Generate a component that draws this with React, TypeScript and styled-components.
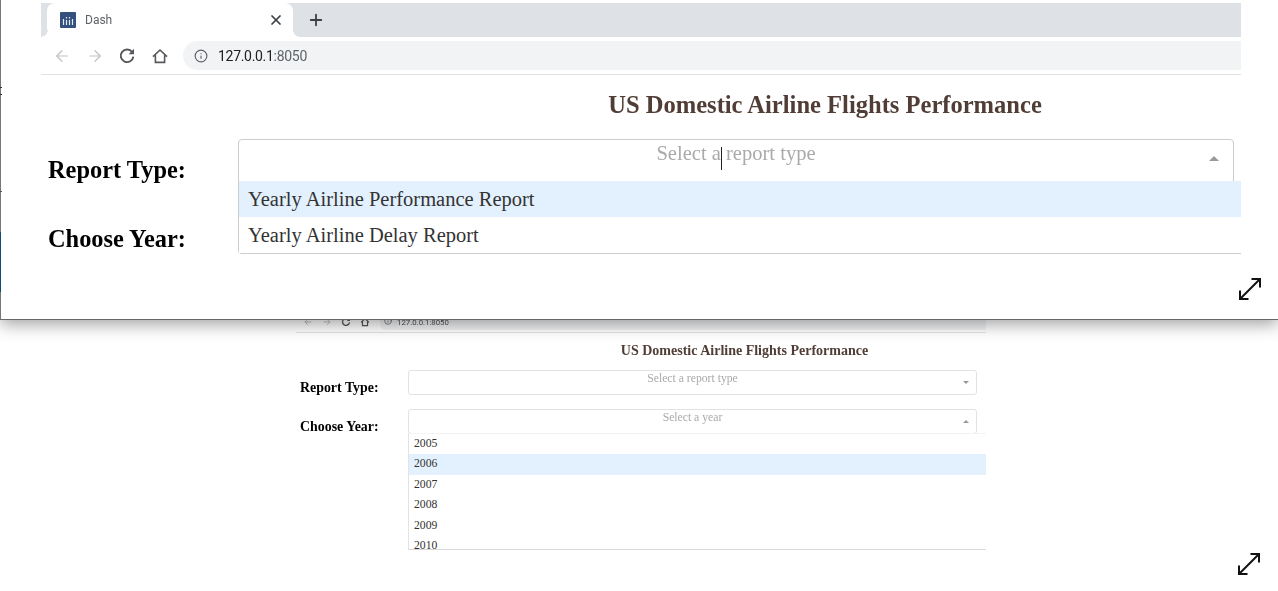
import React from "react";
import styled, { createGlobalStyle } from "styled-components";
import { ArrowLeft, ArrowRight, Info, X, Plus } from "lucide-react";

const Global = createGlobalStyle`
  html, body { margin: 0; padding: 0; background: #fff; }
  body { width: 1278px; height: 591px; overflow: hidden; font-family: "Liberation Serif", serif; }
`;
const Page = styled.div`
  position: relative;
  width: 1278px;
  height: 591px;
  display: flex;
  flex-direction: column;
  overflow: hidden;
`;
const TopPanel = styled.section`
  position: relative;
  z-index: 2;
  box-sizing: border-box;
  height: 320px;
  padding: 3px 37px 0 40px;
  background: #fff;
  border-left: 1px solid #777;
  border-bottom: 1px solid #666;
  box-shadow: 0 4px 16px rgba(0, 0, 0, 0.38);
`;
const EdgeMark = styled.i<{ $top: number; $h: number; $w: number; $c: string }>`
  position: absolute;
  left: -1px;
  top: ${(p) => p.$top}px;
  width: ${(p) => p.$w}px;
  height: ${(p) => p.$h}px;
  background: ${(p) => p.$c};
`;
const LowerPanel = styled.section`
  position: relative;
  z-index: 1;
  flex: 1;
  padding-left: 296px;
`;
const TabStrip = styled.div`
  height: 34px;
  background: #dee1e6;
  display: flex;
  align-items: flex-end;
  padding-left: 6px;
`;
const Tab = styled.div`
  position: relative;
  width: 246px;
  height: 34px;
  box-sizing: border-box;
  background: #fff;
  border-radius: 8px 8px 0 0;
  display: flex;
  align-items: center;
  padding: 0 9px 0 13px;
  color: #5f6368;
  font: 12px "Roboto", sans-serif;
  &::before, &::after {
    content: "";
    position: absolute;
    bottom: 0;
    width: 7px;
    height: 7px;
  }
  &::before {
    left: -6px;
    background: radial-gradient(circle at 0 0, #dee1e6 6.5px, #fff 7px);
  }
  &::after {
    right: -7px;
    background: radial-gradient(circle at 100% 0, #dee1e6 6.5px, #fff 7px);
  }
`;
const TabTitle = styled.span`
  flex: 1;
  margin-left: 9px;
`;
const NewTab = styled.div`
  width: 46px;
  display: flex;
  justify-content: center;
  align-self: center;
  color: #3c4043;
`;
const Toolbar = styled.div`
  height: 38px;
  box-sizing: border-box;
  display: flex;
  align-items: center;
  padding: 4px 0 4px 11px;
  gap: 15px;
  border-bottom: 1px solid #e1e2e3;
`;
const NavIcon = styled.span<{ $off?: boolean }>`
  display: flex;
  color: ${(p) => (p.$off ? "#bfc1c4" : "#55585c")};
  ${(p) => (p.$off ? "transform: translateX(1px);" : "")}
`;
const Omnibox = styled.div`
  flex: 1;
  height: 29px;
  margin-left: -1px;
  background: #f1f3f4;
  border-radius: 15px 0 0 15px;
  display: flex;
  align-items: center;
  padding-left: 11px;
  gap: 10px;
  color: #5f6368;
  font: 14px "Roboto", sans-serif;
  letter-spacing: -0.3px;
`;
const Host = styled.span`
  color: #202124;
`;
const Title = styled.h1`
  margin: 0;
  padding: 14px 0 0 368px;
  height: 32px;
  text-align: center;
  font: bold 24.55px/32px "Liberation Serif", serif;
  color: #503d36;
`;
const Rows = styled.div`
  position: relative;
  margin-top: 12px;
`;
const Row = styled.div`
  display: flex;
  align-items: flex-start;
  height: 69px;
  padding-left: 7px;
`;
const Label = styled.h2`
  margin: 22px 0 0;
  width: 190px;
  font: bold 24.4px/30px "Liberation Serif", serif;
  color: #000;
`;
const Select = styled.div`
  position: relative;
  box-sizing: border-box;
  width: 996px;
  height: 43px;
  margin-top: 6px;
  border: 1px solid #ccc;
  border-radius: 4px 4px 0 0;
  text-align: center;
  font-size: 20.55px;
  line-height: 26px;
  color: #aaa;
`;
const Placeholder = styled.span`
  position: relative;
`;
const Caret = styled.i`
  position: absolute;
  left: 64.5px;
  top: 5px;
  width: 1px;
  height: 23px;
  background: #222;
`;
const Arrow = styled.i<{ $size: number; $right: number; $top: number; $down?: boolean }>`
  position: absolute;
  right: ${(p) => p.$right}px;
  top: ${(p) => p.$top}px;
  width: 0;
  height: 0;
  border-left: ${(p) => p.$size}px solid transparent;
  border-right: ${(p) => p.$size}px solid transparent;
  ${(p) =>
    p.$down
      ? `border-top: ${p.$size}px solid #999;`
      : `border-bottom: ${p.$size}px solid #999;`}
`;
const Menu = styled.div`
  position: absolute;
  left: 197px;
  top: 48px;
  width: 1003px;
  height: 73px;
  box-sizing: border-box;
  background: #fff;
  border-left: 1px solid #ccc;
  border-bottom: 1px solid #ccc;
  border-radius: 0 0 0 4px;
  font-size: 20.5px;
  color: #333;
`;
const Option = styled.div<{ $active?: boolean }>`
  height: 36px;
  line-height: 36px;
  padding-left: 9px;
  background: ${(p) => (p.$active ? "#e3f1fe" : "#fff")};
`;
const Expand = styled.svg<{ $top: number }>`
  position: absolute;
  left: 1236px;
  top: ${(p) => p.$top}px;
`;
const Shot = styled.div`
  width: 690px;
  filter: blur(0.35px);
`;
const MiniBar = styled.div`
  height: 13px;
  box-sizing: border-box;
  display: flex;
  align-items: flex-start;
  padding: 0 0 0 7px;
  gap: 9px;
  border-bottom: 1px solid #e4e4e4;
`;
const MiniBox = styled.div`
  flex: 1;
  height: 10px;
  box-sizing: border-box;
  margin-left: 1px;
  background: #f1f3f4;
  border-radius: 0 0 0 6px;
  display: flex;
  align-items: flex-start;
  gap: 5px;
  padding: 0 0 0 4px;
  color: #4d5054;
  font: 7.8px/5px "Roboto", sans-serif;
`;
const MiniIcon = styled.span<{ $off?: boolean }>`
  display: flex;
  margin-top: -3px;
  color: ${(p) => (p.$off ? "#b5b7ba" : "#55585c")};
`;
const MiniTitle = styled.h1`
  margin: 0;
  padding: 9px 0 0 207px;
  height: 28px;
  text-align: center;
  font: bold 14px/18px "Liberation Serif", serif;
  color: #503d36;
`;
const MiniRow = styled.div`
  display: flex;
  align-items: flex-start;
  height: 39px;
  padding-left: 4px;
`;
const MiniLabel = styled.h2`
  margin: 8px 0 0;
  width: 108px;
  font: bold 13.9px/20px "Liberation Serif", serif;
  color: #000;
`;
const MiniSelect = styled.div`
  position: relative;
  box-sizing: border-box;
  width: 569px;
  height: 25px;
  border: 1px solid #e2e2e2;
  border-radius: 3px;
  text-align: center;
  font-size: 11.7px;
  line-height: 15px;
  color: #aaa;
`;
const MiniRows = styled.div`
  position: relative;
`;
const MiniMenu = styled.div`
  position: absolute;
  left: 112px;
  top: 63px;
  width: 578px;
  height: 117px;
  box-sizing: border-box;
  overflow: hidden;
  background: #fff;
  border-top: 1px solid #f3f3f3;
  border-left: 1px solid #e2e2e2;
  border-bottom: 1px solid #d8d8d8;
  font-size: 11.7px;
  color: #333;
`;
const MiniOption = styled.div<{ $active?: boolean }>`
  height: 20.45px;
  line-height: 20.45px;
  padding-left: 5px;
  background: ${(p) => (p.$active ? "#e3f1fe" : "#fff")};
`;

const ExpandIcon = ({ top }: { top: number }) => (
  <Expand $top={top} width="26" height="26" viewBox="0 0 26 26" fill="none" stroke="#111" strokeWidth="2">
    <path d="M3 23 L23 3" />
    <path d="M14.5 3 H23 V11.5" />
    <path d="M3 14.5 V23 H11.5" />
  </Expand>
);

const ReloadIcon = ({ size, w = 1.9 }: { size: number; w?: number }) => (
  <svg width={size} height={size} viewBox="0 0 18 18" fill="none">
    <path d="M14.2 5.2 A6.3 6.3 0 1 0 15.3 9.6" stroke="currentColor" strokeWidth={w} />
    <path d="M10.6 7.2 H16 V1.8 Z" fill="currentColor" />
  </svg>
);

const HouseIcon = ({ size, w = 1.6 }: { size: number; w?: number }) => (
  <svg width={size} height={size} viewBox="0 0 18 18" fill="none">
    <path d="M2 9.6 L9 3 L16 9.6 M4.4 8.2 V15.4 H13.6 V8.2" stroke="currentColor" strokeWidth={w} />
  </svg>
);

const years = ["2005", "2006", "2007", "2008", "2009", "2010"];

export default function App() {
  return (
    <Page>
      <Global />
      <TopPanel>
        <EdgeMark $top={87} $h={1} $w={2} $c="#333" />
        <EdgeMark $top={94} $h={1} $w={2} $c="#333" />
        <EdgeMark $top={191} $h={1} $w={2} $c="#555" />
        <EdgeMark $top={232} $h={60} $w={1} $c="#0b4c78" />
        <TabStrip>
          <Tab>
            <svg width="16" height="16" viewBox="0 0 16 16">
              <rect width="16" height="16" rx="1" fill="#34507d" />
              <path d="M3.5 7v6M6.5 5v1.5M6.5 8v5M9.5 5v1.5M9.5 8v5M12.5 7v6" stroke="#e4eaf3" strokeWidth="1.2" />
            </svg>
            <TabTitle>Dash</TabTitle>
            <X size={16} color="#3c4043" strokeWidth={2.6} />
          </Tab>
          <NewTab>
            <Plus size={18} strokeWidth={2.4} />
          </NewTab>
        </TabStrip>
        <Toolbar>
          <NavIcon $off><ArrowLeft size={18} strokeWidth={1.6} /></NavIcon>
          <NavIcon $off><ArrowRight size={18} strokeWidth={1.6} /></NavIcon>
          <NavIcon><ReloadIcon size={18} /></NavIcon>
          <NavIcon><HouseIcon size={18} /></NavIcon>
          <Omnibox>
            <Info size={14} strokeWidth={2} />
            <span><Host>127.0.0.1</Host>:8050</span>
          </Omnibox>
        </Toolbar>
        <Title>US Domestic Airline Flights Performance</Title>
        <Rows>
          <Row>
            <Label>Report Type:</Label>
            <Select>
              <Placeholder>Select a report type<Caret /></Placeholder>
              <Arrow $size={5} $right={14} $top={16} />
            </Select>
          </Row>
          <Row>
            <Label>Choose Year:</Label>
          </Row>
          <Menu>
            <Option $active>Yearly Airline Performance Report</Option>
            <Option>Yearly Airline Delay Report</Option>
          </Menu>
        </Rows>
        <ExpandIcon top={276} />
      </TopPanel>
      <LowerPanel>
        <Shot>
          <MiniBar>
            <MiniIcon $off><ArrowLeft size={10} /></MiniIcon>
            <MiniIcon $off><ArrowRight size={10} /></MiniIcon>
            <MiniIcon><ReloadIcon size={10} w={2.4} /></MiniIcon>
            <MiniIcon><HouseIcon size={10} w={2.2} /></MiniIcon>
            <MiniBox>
              <MiniIcon><Info size={8} /></MiniIcon>
              <span>127.0.0.1:8050</span>
            </MiniBox>
          </MiniBar>
          <MiniTitle>US Domestic Airline Flights Performance</MiniTitle>
          <MiniRows>
            <MiniRow>
              <MiniLabel>Report Type:</MiniLabel>
              <MiniSelect>
                Select a report type
                <Arrow $size={3} $right={7} $top={10} $down />
              </MiniSelect>
            </MiniRow>
            <MiniRow>
              <MiniLabel>Choose Year:</MiniLabel>
              <MiniSelect>
                Select a year
                <Arrow $size={3} $right={7} $top={10} />
              </MiniSelect>
            </MiniRow>
            <MiniMenu>
              {years.map((y) => (
                <MiniOption key={y} $active={y === "2006"}>{y}</MiniOption>
              ))}
            </MiniMenu>
          </MiniRows>
        </Shot>
        <ExpandIcon top={231} />
      </LowerPanel>
    </Page>
  );
}
